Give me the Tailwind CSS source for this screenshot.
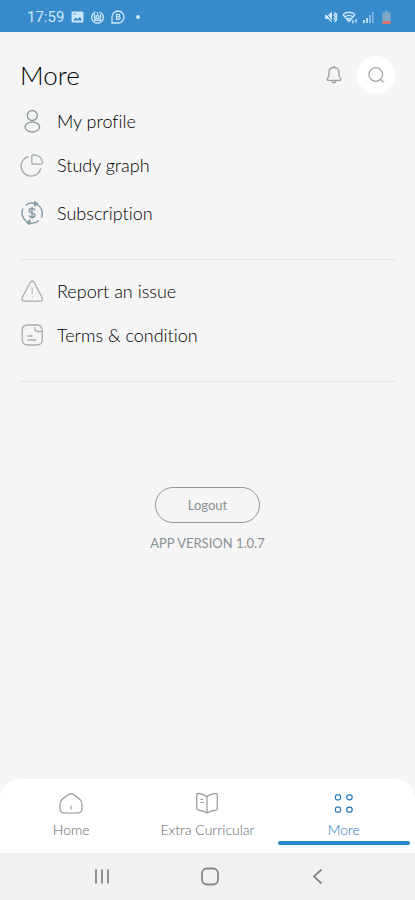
<!DOCTYPE html>
<html lang="en">
<head>
<meta charset="utf-8">
<meta name="viewport" content="width=device-width, initial-scale=1">
<title>More</title>
<script src="https://cdn.jsdelivr.net/npm/@tailwindcss/browser@4"></script>
</head>
<body class="flex min-h-screen flex-col bg-[#f5f5f5] font-['Lato',sans-serif] font-light text-black [font-variant-ligatures:none]">
  <!-- Status bar -->
  <div class="flex h-8 items-center justify-between bg-[#388bcb] pr-6 pl-[27px] pt-[2px] text-[#cbe6fa]">
    <div class="flex items-center gap-[7px]">
      <span class="font-['Roboto',sans-serif] text-[15px] leading-5 font-normal">17:59</span>
      <svg class="h-3 w-[13px]" viewBox="0 0 13 12"><rect x=".5" y=".5" width="12" height="11" rx="1.5" fill="currentColor"/><path d="M2 9.500l2.500-3 2 1.500 2.500-2 2 3.500z" fill="#388bcb"/><path d="M2.500 3h2" stroke="#388bcb"/></svg>
      <svg class="size-[13px]" viewBox="0 0 13 13" fill="none" stroke="currentColor" stroke-width="1.300"><path d="M4.500 1A5.800 5.800 0 1 0 8.500 1M3.500 3v3.500a3 3 0 0 0 6 0V3M6.500 1v2.500"/><circle cx="6.500" cy="6" r="1.500"/><path d="M3 10l2-1.500M10 10L8 8.500"/></svg>
      <svg class="size-[14px]" viewBox="0 0 14 14" fill="none" stroke="currentColor" stroke-width="1.300"><path d="M1 13V7a6 6 0 1 1 6 6z"/><path d="M5.500 4.300h2a1.200 1.200 0 0 1 0 2.500h-2zM5.500 6.800h2.300a1.300 1.300 0 0 1 0 2.600H5.500z"/></svg>
      <span class="ml-1 size-1 rounded-full bg-current"></span>
    </div>
    <div class="flex items-center gap-1">
      <svg class="h-3 w-[14px]" viewBox="0 0 14 12"><path d="M1 4h3l4-3.500v11L4 8H1z" fill="currentColor"/><path d="M1 1l8 10" stroke="#388bcb"/><path d="M10 1.500l2 1-2 2 2 1.500-2 2 2 1.500-1.500 1.500M12.500 2v8" fill="none" stroke="currentColor" stroke-width="1.200"/></svg>
      <svg class="h-[13px] w-4" viewBox="0 0 16 13" fill="none" stroke="currentColor" stroke-width="1.400"><path d="M1 3.500c3.500-3 8.500-3 12 0M3 6c2.500-2 5.500-2 8 0M5 8.300c1.300-1 2.700-1 4 0L7 10.500zM1 3.500l6 7 6-7"/><path d="M11 12.500V9M14 8v3.500"/></svg>
      <svg class="h-3 w-3" viewBox="0 0 12 12" fill="currentColor"><path d="M1 9h2v3H1zM4 7h2v5H4z" opacity=".9"/><path d="M7 4h2v8H7zM10 1h1.500v11H10z" opacity=".5"/></svg>
      <svg class="ml-1 h-[13px] w-[9px]" viewBox="0 0 9 13"><path d="M3 0h3v1.500h2.500V13H.5V1.500H3z" fill="#7fa9c8"/><path d="M.5 10h8v3h-8z" fill="#d9726c"/></svg>
    </div>
  </div>

  <header class="flex items-center justify-between px-5 pt-6">
    <h1 class="text-[26px] leading-8">More</h1>
    <div class="flex items-center gap-[13px]">
      <button type="button" aria-label="Notifications" class="text-[#9a9fa1]">
        <svg class="size-5" viewBox="0 0 20 20" fill="none" stroke="currentColor" stroke-width="1.300" stroke-linecap="round" stroke-linejoin="round"><path d="M10 2.500C6.500 2.500 5 4.800 5 7.200v3.600L3.200 14c-.3.800 0 1.300.8 1.300h12c.8 0 1.100-.5.8-1.300L15 10.800V7.200C15 4.800 13.500 2.500 10 2.500zM8 16c.3 2.300 3.700 2.300 4 0M10 1.300v1"/></svg>
      </button>
      <button type="button" aria-label="Search" class="flex size-[38px] items-center justify-center rounded-full bg-white text-[#a2a6a8]">
        <svg class="size-4" viewBox="0 0 16 16" fill="none" stroke="currentColor" stroke-width="1.300" stroke-linecap="round"><circle cx="7.800" cy="7.500" r="6.800"/><path d="M12.800 12.500l2.200 2.500"/></svg>
      </button>
    </div>
  </header>

  <main class="flex flex-1 flex-col px-5 pt-[5px]">
    <nav aria-label="Account" class="border-b border-[#e3e4e4] pb-5">
      <a href="#" class="flex h-11 items-center gap-[13px] text-[18px] leading-6">
        <svg class="size-6 text-[#929da1]" viewBox="0 0 24 24" fill="none" stroke="currentColor" stroke-width="1.400"><circle cx="12.300" cy="6.500" r="5"/><ellipse cx="12.300" cy="18" rx="7.300" ry="5"/></svg>
        My profile
      </a>
      <a href="#" class="flex h-11 items-center gap-[13px] text-[18px] leading-6">
        <svg class="size-6 text-[#a0abaf]" viewBox="0 0 24 24" fill="none" stroke="currentColor" stroke-width="1.300" stroke-linejoin="round"><path d="M8.500 3.500A10 10 0 1 0 20.800 15.500"/><path d="M14 1.800c-1.500-.3-2.200.3-2.200 1.700V9c0 1.500.7 2.200 2.200 2.200h6.500c1.500 0 2.200-.7 2-2.200-.6-4-4.200-6.800-8.500-7.200z"/></svg>
        Study graph
      </a>
      <a href="#" class="flex h-[52px] items-center gap-[13px] text-[18px] leading-6">
        <svg class="size-6 text-[#8a9ca4]" viewBox="0 0 24 24" fill="none" stroke="currentColor" stroke-width="1.500"><path d="M6.500 20.300A10 10 0 0 1 3 7.500M5.500 4.500A10 10 0 0 1 15 2.500M18 4A10 10 0 0 1 21.300 16.500M18.700 19.500a10 10 0 0 1-9.200 2.500"/><path d="M14.500 0l4 3-4 2.500zM10 18.700l-4 2.800 4 2.500z" fill="currentColor" stroke-width=".8"/><path d="M15 9.300c-.6-1.200-1.600-1.700-3-1.700-1.700 0-2.800.8-2.800 2.100 0 3 5.800 1.600 5.800 4.500 0 1.400-1.200 2.200-3 2.200-1.500 0-2.600-.6-3.200-1.900M12 6v12"/></svg>
        Subscription
      </a>
    </nav>
    <nav aria-label="Support" class="border-b border-[#e3e4e4] pt-[9px] pb-6">
      <a href="#" class="flex h-11 items-center gap-[13px] text-[18px] leading-6">
        <svg class="size-6 text-[#a6aeb1]" viewBox="0 0 24 24" fill="none" stroke="currentColor" stroke-width="1.300" stroke-linecap="round" stroke-linejoin="round"><path d="M10.200 3.500c1.200-2 2.900-2 4.100 0l7.700 15c.9 2 .1 3.700-2 3.700H4.300c-2.100 0-2.900-1.700-2-3.700z"/><path d="M12.200 9v6M12.200 18v.3" opacity=".7"/></svg>
        Report an issue
      </a>
      <a href="#" class="flex h-11 items-center gap-[13px] text-[18px] leading-6">
        <svg class="size-6 text-[#a6aeb1]" viewBox="0 0 24 24" fill="none" stroke="currentColor" stroke-width="1.300" stroke-linecap="round" stroke-linejoin="round"><path d="M13.500 2H8C4 2 2.200 3.800 2.200 7.500v9C2.200 20.200 4 22 8 22h8.500c4 0 5.800-1.800 5.800-5.500V8.500M13.500 2H17c3.500 0 5.300 2 5.300 6.500h-4c-2.500 0-3.500-1-3.500-3V4.500"/><path d="M8 13h4M8 17h8"/></svg>
        Terms &amp; condition
      </a>
    </nav>
    <div class="flex flex-col items-center gap-[11px] pt-[105px] font-normal text-[#8a9194]">
      <button type="button" class="rounded-full border border-[#8e979a] px-8 py-2 text-[13px] leading-[18px]">Logout</button>
      <p class="text-[13px] leading-[18px]">APP VERSION 1.0.7</p>
    </div>
  </main>

  <!-- Tab bar -->
  <nav aria-label="Main" class="grid grid-cols-3 rounded-t-[20px] bg-white px-[3px] text-[14px] leading-4 text-[#60686c]">
    <a href="#" class="flex h-[74px] flex-col items-center gap-[6px] pt-[13px]">
      <svg class="size-6 text-[#92989b]" viewBox="0 0 24 24" fill="none" stroke="currentColor" stroke-width="1.200" stroke-linecap="round" stroke-linejoin="round"><path d="M9.500 2.500c1.800-1.200 3.200-1.200 5 0l6 4.500c1.800 1.500 2.500 3 2.500 5.300v4.200c0 3-1.700 4.500-4.500 4.500h-13C2.700 21 1 19.500 1 16.500v-4.200C1 10 1.700 8.500 3.500 7z"/><path d="M12 14v3"/></svg>
      Home
    </a>
    <a href="#" class="flex h-[74px] flex-col items-center gap-[6px] pt-[13px] whitespace-nowrap">
      <svg class="size-6 text-[#92989b]" viewBox="0 0 24 24" fill="none" stroke="currentColor" stroke-width="1.200" stroke-linecap="round" stroke-linejoin="round"><path d="M12 4.500C9.500 2.700 6.500 1.500 3.500 1.300c-1.200 0-1.800.5-1.800 1.700v13c0 1.300.6 2 1.800 2.200 3 .4 6 1.300 8.500 2.800 2.500-1.500 5.500-2.400 8.500-2.800 1.200-.2 1.800-.9 1.800-2.200V3c0-1.200-.6-1.700-1.800-1.700-3 .2-6 1.400-8.500 3.200zM12 4.500V21M6 7.500h1.500M6 10.500h2.500"/></svg>
      Extra Curricular
    </a>
    <a href="#" aria-current="page" class="relative flex h-[74px] flex-col items-center gap-[6px] pt-[13px] text-[#2078bb]">
      <svg class="size-6" viewBox="0 0 24 24" fill="none" stroke="currentColor" stroke-width="1.200"><rect x="3.500" y="2.800" width="5" height="5" rx="1.500"/><rect x="14.700" y="2.800" width="5.500" height="5" rx="2.500"/><rect x="3.500" y="15.200" width="5" height="5" rx="1.500"/><rect x="14.700" y="15.200" width="5.500" height="5" rx="2.500"/></svg>
      More
      <span class="absolute right-0.5 bottom-2 left-0.5 h-1 rounded-full bg-[#2b86c8]"></span>
    </a>
  </nav>

  <!-- System navigation -->
  <div class="flex h-[47px] items-center justify-between bg-[#f1f1f1] pr-[85px] pl-[90px] text-[#858585]">
    <button type="button" aria-label="Recent apps"><svg class="size-6" viewBox="0 0 24 24" stroke="currentColor" stroke-width="1.800"><path d="M6 4.500v14M12 4.500v14M18 4.500v14"/></svg></button>
    <button type="button" aria-label="Home screen"><svg class="size-6" viewBox="0 0 24 24" fill="none" stroke="currentColor" stroke-width="1.800"><rect x="4" y="3.500" width="16" height="16" rx="5"/></svg></button>
    <button type="button" aria-label="Back"><svg class="size-6" viewBox="0 0 24 24" fill="none" stroke="currentColor" stroke-width="1.800"><path d="M15.500 4.500l-7.500 7 7.500 7"/></svg></button>
  </div>
</body>
</html>
